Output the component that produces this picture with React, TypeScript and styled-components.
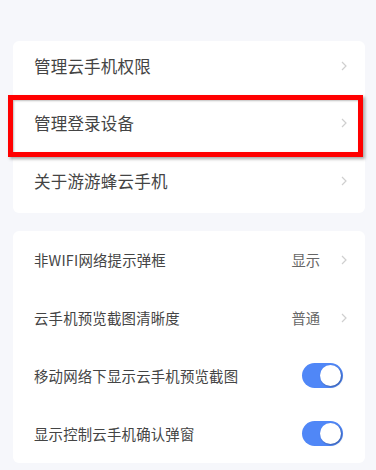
import React from "react";
import styled, { createGlobalStyle } from "styled-components";

const Global = createGlobalStyle`
  html, body { margin: 0; padding: 0; background: #f6f7fb; }
  body { font-family: "Noto Sans CJK SC", "Noto Sans", sans-serif; -webkit-font-smoothing: antialiased; }
`;

const Page = styled.div`
  width: 376px;
  height: 470px;
  overflow: hidden;
  box-sizing: border-box;
  padding: 41px 11px 0 13px;
  display: flex;
  flex-direction: column;
  gap: 18px;
`;

const Card = styled.div`
  background: #ffffff;
  border-radius: 6px;
  display: flex;
  flex-direction: column;
`;

const Row = styled.div<{ $h: number; $lift?: number }>`
  position: relative;
  box-sizing: border-box;
  height: ${(p) => p.$h}px;
  display: flex;
  align-items: center;
  padding: 0 18px ${(p) => p.$lift ?? 0}px 21px;
`;

const Label = styled.span<{ $size: number }>`
  flex: 1;
  font-size: ${(p) => p.$size}px;
  color: #444444;
  letter-spacing: 0.2px;
`;

const Value = styled.span`
  font-size: 14.3px;
  color: #666666;
  margin-right: 21px;
`;

const Highlight = styled.div`
  position: absolute;
  left: -5px;
  right: 2px;
  top: -3px;
  bottom: -1px;
  border: 5px solid #ff0000;
  box-shadow: 2px 2px 3px rgba(0, 0, 0, 0.35), inset 1px 1px 2px rgba(0, 0, 0, 0.25);
  pointer-events: none;
`;

const Toggle = styled.div`
  width: 41px;
  height: 25px;
  border-radius: 13px;
  background: #5087f7;
  position: relative;
  margin-right: 4px;
`;

const Knob = styled.div`
  position: absolute;
  right: 2px;
  top: 2px;
  width: 21px;
  height: 21px;
  border-radius: 50%;
  background: #ffffff;
  box-shadow: 1px 1px 2px rgba(0, 0, 0, 0.3);
`;

const Chevron = () => (
  <svg width="6" height="10" viewBox="0 0 6 10">
    <path d="M1 1 L5 5 L1 9" fill="none" stroke="#cfcfcf" strokeWidth="1.2" />
  </svg>
);

const top = ["管理云手机权限", "管理登录设备", "关于游游蜂云手机"];

export default function App() {
  return (
    <>
      <Global />
      <Page>
        <Card>
          {top.map((t, i) => (
            <Row key={t} $h={57.3} $lift={7}>
              <Label $size={16.5}>{t}</Label>
              <Chevron />
              {i === 1 && <Highlight />}
            </Row>
          ))}
        </Card>
        <Card>
          <Row $h={58}>
            <Label $size={14.4}>非WIFI网络提示弹框</Label>
            <Value>显示</Value>
            <Chevron />
          </Row>
          <Row $h={58}>
            <Label $size={14.4}>云手机预览截图清晰度</Label>
            <Value>普通</Value>
            <Chevron />
          </Row>
          <Row $h={58}>
            <Label $size={14.4}>移动网络下显示云手机预览截图</Label>
            <Toggle><Knob /></Toggle>
          </Row>
          <Row $h={58}>
            <Label $size={14.4}>显示控制云手机确认弹窗</Label>
            <Toggle><Knob /></Toggle>
          </Row>
        </Card>
      </Page>
    </>
  );
}
